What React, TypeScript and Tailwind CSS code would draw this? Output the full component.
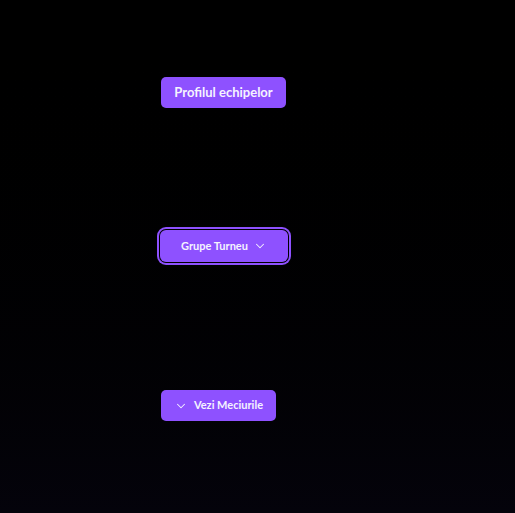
import { ChevronDown } from "lucide-react";

const font = { fontFamily: 'Lato, "Noto Sans", sans-serif' };

const App = () => {
  return (
    <div
      className="min-h-[513px] w-full bg-gradient-to-b from-black to-[#04030b] pl-[161px]"
      style={font}
    >
      {/* Team profiles */}
      <div className="pt-[77px]">
        <button className="h-[31px] w-[125px] rounded-[5px] bg-violet-500 text-[13px] font-bold text-violet-50">
          Profilul echipelor
        </button>
      </div>

      {/* Tournament groups, focused */}
      <div className="pt-[122px]">
        <button className="-ml-px flex h-[32px] w-[128px] items-center justify-center gap-[5px] rounded-[6px] bg-violet-500 text-[11px] font-bold text-violet-50 ring-2 ring-violet-500 ring-offset-1 ring-offset-black">
          Grupe Turneu
          <ChevronDown className="h-3.5 w-3.5" strokeWidth={1.75} />
        </button>
      </div>

      {/* Matches */}
      <div className="pt-[128px]">
        <button className="flex h-[31px] w-[115px] items-center justify-center gap-[6px] rounded-[5px] bg-violet-500 text-[11px] font-bold text-violet-50">
          <ChevronDown className="h-3.5 w-3.5" strokeWidth={1.75} />
          Vezi Meciurile
        </button>
      </div>
    </div>
  );
};

export default App;
